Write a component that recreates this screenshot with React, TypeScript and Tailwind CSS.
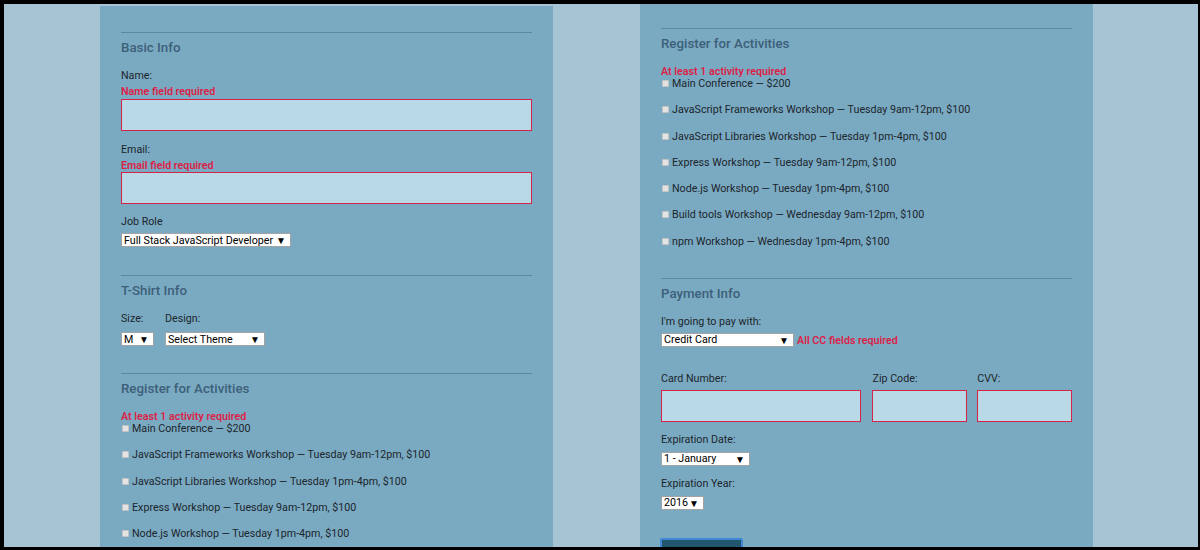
import React from "react";

const font = { fontFamily: "Roboto, 'Liberation Sans', sans-serif" };

const Heading = ({ children }: { children: React.ReactNode }) => (
  <div className="mt-[6px] h-[16px] pt-px text-[13.3px] leading-[16px] font-medium text-[#3d6079] whitespace-nowrap">{children}</div>
);

const Rule = ({ className = "" }: { className?: string }) => (
  <div className={"border-t border-[#5b88a2] " + className} />
);

const Label = ({ children, className = "" }: { children: React.ReactNode; className?: string }) => (
  <div className={"h-[14px] pt-px text-[10.7px] leading-[14px] text-[#1c252b] whitespace-nowrap " + className}>{children}</div>
);

const Error = ({ children, className = "" }: { children: React.ReactNode; className?: string }) => (
  <div className={"h-[14px] pt-px text-[10.7px] leading-[14px] font-semibold text-[#dc1f48] whitespace-nowrap " + className}>{children}</div>
);

const Field = ({ className = "" }: { className?: string }) => (
  <div className={"h-[32px] border border-[#d42449] bg-[#b9d9e6] " + className} />
);

const Select = ({ value, className = "" }: { value: string; className?: string }) => (
  <div className={"flex h-[14px] items-center justify-between border border-[#a3a3a3] bg-white pt-[2px] pl-[2px] pr-[4px] text-[10.7px] leading-none text-black whitespace-nowrap " + className}>
    <span>{value}</span>
    <span className="text-[10px]">▼</span>
  </div>
);

const Activity = ({ text, first = false }: { text: string; first?: boolean }) => (
  <div className={"flex h-[12px] items-center " + (first ? "" : "mt-[14.3px]")}>
    <span className="ml-px -mt-px h-[7px] w-[7px] rounded-[1px] border border-[#c4c4c4] bg-[#e3e3e3]" />
    <span className="ml-[3px] text-[10.7px] leading-[12px] text-[#1c252b] whitespace-nowrap">{text}</span>
  </div>
);

const activities = [
  "Main Conference — $200",
  "JavaScript Frameworks Workshop — Tuesday 9am-12pm, $100",
  "JavaScript Libraries Workshop — Tuesday 1pm-4pm, $100",
  "Express Workshop — Tuesday 9am-12pm, $100",
  "Node.js Workshop — Tuesday 1pm-4pm, $100",
  "Build tools Workshop — Wednesday 9am-12pm, $100",
  "npm Workshop — Wednesday 1pm-4pm, $100",
];

const Activities = ({ count }: { count: number }) => (
  <>
    <Heading>Register for Activities</Heading>
    <div className="mt-[15px] h-[12px] text-[10.7px] leading-[12px] font-semibold text-[#dc1f48] whitespace-nowrap">At least 1 activity required</div>
    {activities.slice(0, count).map((a, i) => (
      <Activity key={a} text={a} first={i === 0} />
    ))}
  </>
);

export default function App() {
  return (
    <div
      className="box-border flex h-[550px] w-[1200px] overflow-hidden border-t-4 border-r-2 border-b-[3px] border-l-4 border-black bg-[#a7c4d5]"
      style={font}
    >
      {/* left column */}
      <div className="mt-[2px] ml-[96px] w-[453px] shrink-0 overflow-hidden bg-[#7aaac2] px-[21px] pt-[26px]">
        <Rule />
        <Heading>Basic Info</Heading>
        <Label className="mt-[13px]">Name:</Label>
        <Error className="mt-[2px]">Name field required</Error>
        <Field className="mt-px" />
        <Label className="mt-[11px]">Email:</Label>
        <Error className="mt-[2px]">Email field required</Error>
        <Field />
        <Label className="mt-[10px]">Job Role</Label>
        <Select value="Full Stack JavaScript Developer" className="mt-[5px] w-[170px]" />

        <Rule className="mt-[28px]" />
        <Heading>T-Shirt Info</Heading>
        <div className="mt-[13px] flex gap-[11px]">
          <div>
            <Label>Size:</Label>
            <Select value="M" className="mt-[7px] w-[33px]" />
          </div>
          <div>
            <Label>Design:</Label>
            <Select value="Select Theme" className="mt-[7px] w-[100px]" />
          </div>
        </div>

        <Rule className="mt-[27px]" />
        <Activities count={5} />
      </div>

      {/* right column */}
      <div className="ml-[87px] w-[453px] shrink-0 overflow-hidden bg-[#7aaac2] px-[21px] pt-[24px]">
        <Rule />
        <Activities count={7} />

        <Rule className="mt-[30px]" />
        <Heading>Payment Info</Heading>
        <Label className="mt-[13px]">I'm going to pay with:</Label>
        <div className="mt-[5px] flex items-center">
          <Select value="Credit Card" className="w-[133px]" />
          <Error className="ml-[3px]">All CC fields required</Error>
        </div>

        <div className="mt-[24px] flex">
          <div className="w-[201px]">
            <Label>Card Number:</Label>
            <Field className="mt-[5px]" />
          </div>
          <div className="ml-[11px] w-[95px]">
            <Label>Zip Code:</Label>
            <Field className="mt-[5px]" />
          </div>
          <div className="ml-[10px] w-[95px]">
            <Label>CVV:</Label>
            <Field className="mt-[5px]" />
          </div>
        </div>

        <Label className="mt-[10px]">Expiration Date:</Label>
        <Select value="1 - January" className="mt-[6px] w-[89px]" />
        <Label className="mt-[10px]">Expiration Year:</Label>
        <Select value="2016" className="mt-[6px] w-[43px]" />

        <button className="-ml-px mt-[28px] h-[22px] w-[83px] rounded-[2px] border-2 border-[#3f86d4] bg-[#22556e]" />
      </div>
    </div>
  );
}
